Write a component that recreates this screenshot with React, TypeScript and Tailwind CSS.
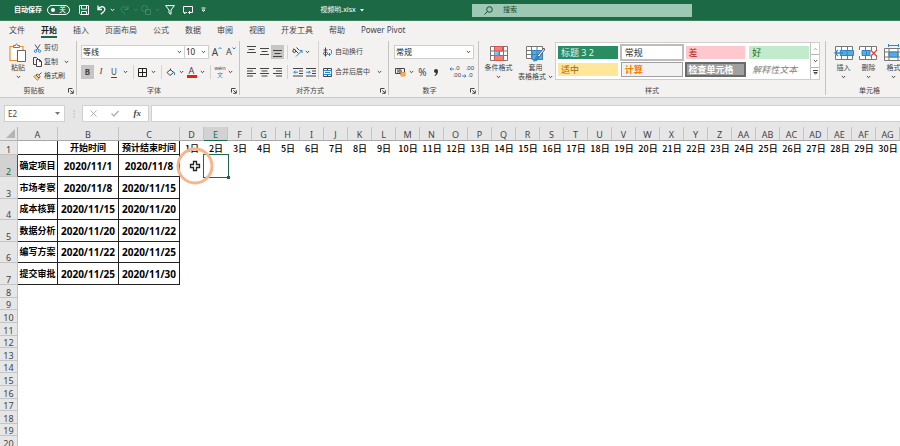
import { useState } from 'react';
import type { ReactNode } from 'react';

const tabs = ['文件', '开始', '插入', '页面布局', '公式', '数据', '审阅', '视图', '开发工具', '帮助', 'Power Pivot'];

interface CellStyle {
  name: string;
  className: string;
}

const cellStyles: CellStyle[] = [
  { name: '标题 3 2', className: 'bg-[#2a8c63] text-[#e6f2ec]' },
  { name: '常规', className: 'bg-white text-[#333] outline-2 outline-[#bdbdbd]' },
  { name: '差', className: 'bg-[#ffc7ce] text-[#b3261e]' },
  { name: '好', className: 'bg-[#c0eccd] text-[#1b6b1b]' },
  { name: '适中', className: 'bg-[#ffe699] text-[#a8650b]' },
  { name: '计算', className: 'bg-[#f2f2f2] font-bold text-[#fa7d00] outline outline-[#a0a0a0]' },
  { name: '检查单元格', className: 'bg-[#a0a0a0] font-bold text-white outline-2 -outline-offset-1 outline-[#6a6a6a]' },
  { name: '解释性文本', className: 'bg-white italic text-[#7f7f7f]' }
];

const tasks = [
  { name: '确定项目', start: '2020/11/1', end: '2020/11/8' },
  { name: '市场考察', start: '2020/11/8', end: '2020/11/15' },
  { name: '成本核算', start: '2020/11/15', end: '2020/11/20' },
  { name: '数据分析', start: '2020/11/20', end: '2020/11/22' },
  { name: '编写方案', start: '2020/11/22', end: '2020/11/25' },
  { name: '提交审批', start: '2020/11/25', end: '2020/11/30' }
];

const days = Array.from({ length: 30 }, (_, i) => i + 1);
const taskHeights = [22, 22, 21, 22, 21, 22];
const emptyHeights = [13, 12, 13, 13, 12];
const emptyRows = Array.from({ length: 13 }, (_, i) => ({
  number: i + 8,
  height: emptyHeights[i % emptyHeights.length]
}));

// 0 -> A, 25 -> Z, 26 -> AA
const columnName = (index: number): string =>
  index < 26 ? String.fromCharCode(65 + index) : `A${String.fromCharCode(65 + index - 26)}`;

function Icon({ w, h, children }: { w: number; h: number; children: ReactNode }) {
  return (
    <svg
      width={w}
      height={h}
      viewBox={`0 0 ${w} ${h}`}
      fill="none"
      stroke="currentColor"
      strokeWidth="1"
      className="shrink-0"
      aria-hidden="true"
    >
      {children}
    </svg>
  );
}

function Chevron() {
  return (
    <Icon w={5} h={4}>
      <path d="M.8 1l1.7 1.7L4.2 1" />
    </Icon>
  );
}

function Tool({ label, className, children }: { label: string; className: string; children: ReactNode }) {
  return (
    <button
      type="button"
      aria-label={label}
      className={`flex h-3.5 shrink-0 items-center justify-center whitespace-nowrap ${className}`}
    >
      {children}
    </button>
  );
}

function Drop({ label, className = 'w-2.5' }: { label: string; className?: string }) {
  return (
    <Tool label={label} className={className}>
      <Chevron />
    </Tool>
  );
}

function Sep() {
  return <span className="mx-[3px] h-3.5 w-px shrink-0 bg-[#d6d4d2]" />;
}

function Group({ label, launcher, className, children }: {
  label: string;
  launcher?: boolean;
  className: string;
  children: ReactNode;
}) {
  return (
    <section aria-label={label} className={`flex h-[54px] shrink-0 flex-col border-r border-[#c6c4c2] ${className}`}>
      <div className="flex flex-1">{children}</div>
      <div className="flex h-[9px] items-center">
        <span className="flex-1 text-center leading-[9px]">{label}</span>
        {launcher && (
          <button type="button" aria-label={`${label}设置`} className="w-2">
            <Icon w={6} h={6}>
              <path d="M.5 4.5v-4h4M2.3 2.3l2.7 2.7M5.3 2.3v3h-3" />
            </Icon>
          </button>
        )}
      </div>
    </section>
  );
}

function BigButton({ icon, lines, className }: { icon: ReactNode; lines: string[]; className: string }) {
  return (
    <button type="button" className={`flex shrink-0 flex-col items-center pt-0.5 leading-[9px] whitespace-nowrap ${className}`}>
      <span className="flex h-5 items-center">{icon}</span>
      <span>{lines[0]}</span>
      <span className="flex h-[9px] items-center gap-0.5">
        {lines[1]}
        <Chevron />
      </span>
    </button>
  );
}

function Picker({ label, options, className }: { label: string; options: string[]; className: string }) {
  return (
    <div className={`relative flex h-3.5 shrink-0 items-center border border-[#d0cecc] bg-white ${className}`}>
      <select aria-label={label} className="h-full w-full appearance-none bg-transparent pl-px text-[8px] leading-3 text-[#222] outline-none">
        {options.map((option) => (
          <option key={option}>{option}</option>
        ))}
      </select>
      <span className="pointer-events-none absolute right-0.5">
        <Chevron />
      </span>
    </div>
  );
}

function TitleBar() {
  return (
    <header className="grid h-[21px] grid-cols-[208px_264fr_220fr_208fr] items-center border-b border-[#3f8460] bg-[#1c6a45] text-[7px] text-white">
      <div className="flex items-center pl-3.5">
        <label htmlFor="autosave" className="w-[33px] font-bold whitespace-nowrap">自动保存</label>
        <span className="relative flex w-8 items-center">
          <input
            id="autosave"
            type="checkbox"
            role="switch"
            className="h-2.5 w-[23px] appearance-none rounded-full border border-white before:mt-[2px] before:ml-[3px] before:block before:size-1 before:rounded-full before:bg-white"
          />
          <span className="pointer-events-none absolute left-3 leading-[10px]">关</span>
        </span>
        <button type="button" aria-label="保存" className="w-[18px]">
          <Icon w={10} h={10}>
            <path d="M.5.5h9v9h-8l-1-1zM2.5.5v3.5h5V.5M2.5 9.5v-3h5v3" />
          </Icon>
        </button>
        <button type="button" aria-label="撤消" className="flex w-[23px] items-center gap-1">
          <Icon w={9} h={10}>
            <path strokeWidth="1.3" d="M1 .5v4h4M1.2 4.2C3 1.6 5.3 1 6.8 2.3c1.6 1.5 1.3 3-.2 4.5L3.8 9.3" />
          </Icon>
          <Chevron />
        </button>
        <button type="button" aria-label="恢复" className="flex w-[21px] items-center gap-1 text-[#438665]">
          <Icon w={9} h={10}>
            <path d="M8 .5v4H4M7.8 4.2C6 1.6 3.7 1 2.2 2.3.6 3.8.9 5.3 2.4 6.8l2.8 2.5" />
          </Icon>
          <Chevron />
        </button>
        <button type="button" aria-label="形状" className="flex w-6 items-center gap-1 text-[#438665]">
          <Icon w={10} h={10}>
            <circle cx="3.5" cy="3.5" r="3" />
            <path d="M4.5 4.5h5v5h-5z" />
          </Icon>
          <Chevron />
        </button>
        <button type="button" aria-label="筛选" className="w-[18px]">
          <Icon w={10} h={10}>
            <path d="M.6.6h8.8L6 5v4.3L4 8V5z" />
          </Icon>
        </button>
        <button type="button" aria-label="批注" className="w-[18px]">
          <Icon w={10} h={10}>
            <path d="M4 7.5H2.5L1.5 9V7.5h-1v-6h9V6M9.5 4.5v3h-4M7 6L5.5 7.5 7 9" />
          </Icon>
        </button>
        <button type="button" aria-label="自定义快速访问工具栏">
          <Icon w={5} h={6}>
            <path d="M.5 1h4M1 3l1.5 1.5L4 3z" />
          </Icon>
        </button>
      </div>
      <h1 className="flex items-center justify-center gap-1 pl-1">
        视频哟.xlsx
        <svg width="4" height="3" fill="currentColor" aria-hidden="true">
          <path d="M0 0h4L2 2.5z" />
        </svg>
      </h1>
      <label className="flex h-[13px] items-center gap-2.5 bg-[#9dc8b3] pl-3 text-[#174d34]">
        <Icon w={9} h={9}>
          <circle cx="5.5" cy="3.5" r="2.8" />
          <path d="M3.5 5.5L.5 8.5" />
        </Icon>
        <input type="text" aria-label="搜索" placeholder="搜索" className="min-w-0 flex-1 bg-transparent outline-none placeholder:text-[#174d34]" />
      </label>
    </header>
  );
}

function TabBar({ active, onSelect }: { active: string; onSelect: (tab: string) => void }) {
  return (
    <nav className="flex h-[19px] gap-4 overflow-hidden pt-0.5 pl-[9px] text-[8px] leading-3">
      {tabs.map((tab) => (
        <button
          key={tab}
          type="button"
          onClick={() => onSelect(tab)}
          className={`h-3.5 shrink-0 border-b whitespace-nowrap ${
            tab === active ? 'border-[#1c6a45] font-bold text-[#222] shadow-[0_1px_0_#1c6a45]' : 'border-transparent'
          }`}
        >
          {tab}
        </button>
      ))}
    </nav>
  );
}

function ClipboardGroup() {
  return (
    <Group label="剪贴板" launcher className="w-[77px]">
      <BigButton
        className="w-[30px] pl-1.5"
        lines={['粘贴', '']}
        icon={
          <Icon w={18} h={20}>
            <path fill="#fff" stroke="#e8912d" strokeWidth="1.2" d="M4 3.5H1v14h7.5v-10H14v-4h-3" />
            <path stroke="#777" fill="#f3f2f1" d="M4.5 4.5v-2h2c0-2 2-2 2 0h2v2z" />
            <path fill="#fff" stroke="#666" d="M8.5 7.5h8v11h-8z" />
          </Icon>
        }
      />
      <div className="flex flex-col pl-[3px]">
        <button type="button" className="flex h-3.5 items-center gap-0.5">
          <Icon w={9} h={9}>
            <path stroke="#555" d="M2 .5l3.6 5.5M7 .5L3.4 6" />
            <circle cx="2.5" cy="7.2" r="1.2" stroke="#2b88c8" />
            <circle cx="6.5" cy="7.2" r="1.2" stroke="#2b88c8" />
          </Icon>
          剪切
        </button>
        <div className="flex">
          <button type="button" className="flex h-3.5 items-center gap-0.5">
            <Icon w={9} h={10}>
              <path d="M3 7.5H.5v-7h3L5 2" />
              <path fill="#fff" d="M3.5 2.5h3l2 2v5h-5z" />
              <path d="M6.5 2.5v2h2" />
            </Icon>
            复制
          </button>
          <Drop label="复制选项" className="ml-1 w-2" />
        </div>
        <button type="button" className="flex h-3.5 items-center gap-0.5">
          <Icon w={9} h={9}>
            <path stroke="#e8912d" fill="#f8c98c" d="M.5 4.5L3 3l3 3-1.5 2.5z" />
            <path stroke="#555" d="M3 3l1.5-1L7 4.5 6 6zM6 3L8.5.5" />
          </Icon>
          格式刷
        </button>
      </div>
    </Group>
  );
}

function FontGroup() {
  return (
    <Group label="字体" launcher className="w-[163px]">
      <div className="flex flex-col gap-1.5 pt-1 pl-1">
        <div className="flex">
          <Picker label="字体" options={['等线', '宋体', '黑体']} className="w-[104px]" />
          <Picker label="字号" options={['10', '11', '12']} className="-ml-px w-[25px]" />
          <Tool label="增大字号" className="ml-0.5 w-3 items-start text-[10px] leading-3.5">
            A<Icon w={4} h={6}><path stroke="#2b88c8" d="M.5 4L2 2.5 3.5 4" /></Icon>
          </Tool>
          <Tool label="减小字号" className="ml-0.5 w-3 items-start text-[9px] leading-3.5">
            A<Icon w={4} h={6}><path stroke="#2b88c8" d="M.5 2.5L2 4l1.5-1.5" /></Icon>
          </Tool>
        </div>
        <div className="flex">
          <Tool label="加粗" className="w-[13px] bg-[#c8c6c4] text-[8px] font-bold">B</Tool>
          <Tool label="倾斜" className="w-3.5 font-['Liberation_Serif',serif] text-[9px] italic">I</Tool>
          <Tool label="下划线" className="w-3 text-[8px] underline underline-offset-2">U</Tool>
          <Drop label="下划线选项" />
          <Sep />
          <Tool label="边框" className="w-[11px]">
            <Icon w={9} h={9}><path stroke="#222" d="M.5.5h8v8h-8zM4.5.5v8M.5 4.5h8" /></Icon>
          </Tool>
          <Drop label="边框选项" />
          <Sep />
          <Tool label="填充颜色" className="w-[11px]">
            <Icon w={10} h={9}>
              <path d="M4.5.5v2M1 4.5l3.5-3 3 3-3.5 3z" />
              <path fill="#2b88c8" stroke="#2b88c8" d="M7.5 3.5c1 1 1.2 2 1 3.5" />
            </Icon>
          </Tool>
          <Drop label="填充颜色选项" />
          <Tool label="字体颜色" className="w-[11px] flex-col text-[9px] leading-[9px]">
            A<span className="h-[3px] w-2.5 bg-[#e81f12]" />
          </Tool>
          <Drop label="字体颜色选项" />
          <Sep />
          <Tool label="拼音指南" className="w-3 flex-col font-['Liberation_Sans','Noto_Sans_CJK_SC',sans-serif] text-[6px] leading-[7px]">
            <span>wén</span>
            <span className="text-[#2b88c8]">文</span>
          </Tool>
          <Drop label="拼音选项" className="w-2" />
        </div>
      </div>
    </Group>
  );
}

const verticalAligns = [
  { label: '顶端对齐', className: 'w-[13px] pb-1' },
  { label: '垂直居中', className: 'w-[13px]' },
  { label: '底端对齐', className: 'w-[13px] bg-[#c8c6c4] pt-1' }
];

const horizontalAligns = [
  { label: '左对齐', d: 'M0 .5h9M0 3h6M0 5.5h9M0 8h6' },
  { label: '居中', d: 'M0 .5h9M1.5 3h6M0 5.5h9M1.5 8h6' },
  { label: '右对齐', d: 'M0 .5h9M3 3h6M0 5.5h9M3 8h6' }
];

function AlignGroup() {
  return (
    <Group label="对齐方式" launcher className="w-[149px]">
      <div className="flex flex-col gap-1.5 pt-1 pl-[5px]">
        <div className="flex">
          {verticalAligns.map((item) => (
            <Tool key={item.label} label={item.label} className={item.className}>
              <Icon w={9} h={8}><path d="M0 .5h9M1.5 3.5h6M0 6.5h9" /></Icon>
            </Tool>
          ))}
          <Sep />
          <Tool label="方向" className="w-[13px]">
            <Icon w={11} h={10}>
              <circle cx="2.3" cy="4" r="1.5" />
              <path d="M1.5 1.5l5 5M4.5.5l2.5 2.5" />
              <path stroke="#2b88c8" d="M4 9.5l6-6M7.5 3.5H10V6" />
            </Icon>
          </Tool>
          <Drop label="方向选项" className="w-1.5" />
        </div>
        <div className="flex">
          {horizontalAligns.map((item) => (
            <Tool key={item.label} label={item.label} className="w-[13px]">
              <Icon w={9} h={9}><path d={item.d} /></Icon>
            </Tool>
          ))}
          <Sep />
          <Tool label="减少缩进量" className="w-[13px]">
            <Icon w={10} h={9}>
              <path d="M0 .5h10M6 3h4M6 5.5h4M0 8h10" />
              <path stroke="#2b88c8" d="M5 4.2H.8M2.3 2.7L.8 4.2l1.5 1.5" />
            </Icon>
          </Tool>
          <Tool label="增加缩进量" className="w-[13px]">
            <Icon w={10} h={9}>
              <path d="M0 .5h10M6 3h4M6 5.5h4M0 8h10" />
              <path stroke="#2b88c8" d="M0 4.2h4.2M2.7 2.7l1.5 1.5-1.5 1.5" />
            </Icon>
          </Tool>
        </div>
      </div>
      <span className="mr-1 ml-px h-[38px] w-px bg-[#d6d4d2]" />
      <div className="flex flex-col gap-1.5 pt-1">
        <Tool label="自动换行" className="gap-[3px] self-start">
          <Icon w={9} h={11}>
            <path d="M2.5.5v9M.5 3h4M.5 6.5c0-2 4-2 4 0s-4 2-4 0" />
            <path stroke="#2b88c8" d="M6 2.5h1.5c1.5 0 1.5 5 0 5H5.5M7 6L5.5 7.5 7 9" />
          </Icon>
          自动换行
        </Tool>
        <div className="flex">
          <Tool label="合并后居中" className="gap-[3px]">
            <Icon w={9} h={9}>
              <path d="M.5.5h8v8h-8zM4.5.5v2M4.5 6.5v2" />
              <path fill="#e2f0fa" stroke="#2b88c8" d="M.5 2.5h8v4h-8zM2 4.5h5" />
            </Icon>
            合并后居中
          </Tool>
          <Drop label="合并选项" className="ml-1 w-2.5" />
        </div>
      </div>
    </Group>
  );
}

function NumberGroup() {
  return (
    <Group label="数字" launcher className="w-[90px]">
      <div className="flex flex-col gap-1.5 pt-1 pl-[5px]">
        <Picker label="数字格式" options={['常规', '数值', '货币', '日期']} className="w-20" />
        <div className="flex">
          <Tool label="会计数字格式" className="w-3">
            <Icon w={11} h={10}>
              <path d="M.5 1.5h9v5h-9zM2 3h1.5M2 5h1.5" />
              <circle cx="5" cy="4" r="1.3" />
              <path stroke="#e8912d" fill="#f8d8ad" d="M6 5.5h4v3.5H6zM6 7.2h4" />
            </Icon>
          </Tool>
          <Drop label="会计格式选项" />
          <Tool label="百分比样式" className="w-[13px] text-[10px]">%</Tool>
          <Tool label="千位分隔样式" className="mr-1.5 w-[13px]">
            <svg width="6" height="9" fill="#333" aria-hidden="true">
              <path d="M3 1a2 2 0 0 1 2 2c0 2.5-1 4-3 5l-.5-.8C2.5 6.5 3 6 3 5a2 2 0 0 1 0-4z" />
            </svg>
          </Tool>
          <Tool label="增加小数位数" className="w-[13px] flex-col font-['Liberation_Sans',sans-serif] text-[6px] leading-[7px]">
            <span className="flex items-center">
              <Icon w={5} h={4}><path stroke="#2b88c8" d="M5 2H1M2.5.5L1 2l1.5 1.5" /></Icon>
              .0
            </span>
            <span className="self-end">.00</span>
          </Tool>
          <Tool label="减少小数位数" className="w-[13px] flex-col font-['Liberation_Sans',sans-serif] text-[6px] leading-[7px]">
            <span className="self-end">.00</span>
            <span className="flex items-center">
              <Icon w={5} h={4}><path stroke="#2b88c8" d="M0 2h4M2.5.5L4 2 2.5 3.5" /></Icon>
              .0
            </span>
          </Tool>
        </div>
      </div>
    </Group>
  );
}

function StylesGroup() {
  return (
    <Group label="样式" className="w-[347px]">
      <BigButton
        className="ml-px w-[37px]"
        lines={['条件格式', '']}
        icon={
          <Icon w={18} h={15}>
            <path fill="#fff" stroke="#777" d="M.5.5h17v14H.5zM4.5.5v14M9.5.5v14M13.5.5v14M.5 5h17M.5 9.5h17" />
            <path fill="#f08078" stroke="#d9534a" d="M4.5.5h8V5h-8zM4.5 9.5h9v5h-9z" />
            <path fill="#8cc4ec" stroke="#5aa9e0" d="M4.5 5.5h4v3.5h-4z" />
          </Icon>
        }
      />
      <BigButton
        className="w-[37px]"
        lines={['套用', '表格格式']}
        icon={
          <Icon w={19} h={17}>
            <path fill="#fff" stroke="none" d="M.5 1h16v13H.5z" />
            <path fill="#5aa9e0" stroke="none" d="M6 5h11v10H6z" />
            <path stroke="#777" d="M.5 1.5h16V5M.5 1.5v12H6M5.500 1.500v12M11 1.5V5M.5 5.5h16M.5 9.5h5" />
            <path stroke="#2b88c8" d="M6 5.5h10.5v9H6zM6 9.5h10M11 5.5v5" />
            <path fill="#fff" stroke="#555" d="M18 3l-6.5 7.5 1.5 1.5L18.5 5z" />
            <path fill="#2b88c8" stroke="#2b88c8" d="M11 11l2 1.5c-.5 2.5-3 3.5-5.5 3.5C9.5 14.5 9 12 11 11z" />
          </Icon>
        }
      />
      <div className="mt-px ml-px flex h-[38px] w-[265px] border border-[#d0cecc] bg-white">
        <div className="grid flex-1 grid-cols-4 content-start gap-1 py-[3px] pr-px pl-0.5">
          {cellStyles.map((style) => (
            <button
              key={style.name}
              type="button"
              className={`h-[13px] overflow-hidden pl-[3px] text-left text-[9px] leading-[13px] whitespace-nowrap ${style.className}`}
            >
              {style.name}
            </button>
          ))}
        </div>
        <div className="flex w-[9px] flex-col divide-y divide-[#b8b6b4] border-l border-[#c6c4c2]">
          <button type="button" aria-label="上一行" className="flex flex-1 items-center justify-center text-[#aaa]">
            <Icon w={5} h={4}><path d="M.8 3l1.7-1.7L4.2 3" /></Icon>
          </button>
          <button type="button" aria-label="下一行" className="flex flex-1 items-center justify-center">
            <Chevron />
          </button>
          <button type="button" aria-label="其他样式" className="flex flex-1 items-center justify-center">
            <Icon w={5} h={6}><path d="M0 .5h5M.8 2.5l1.7 1.7 1.7-1.7z" /></Icon>
          </button>
        </div>
      </div>
    </Group>
  );
}

function CellsGroup() {
  return (
    <Group label="单元格" className="w-[87px] border-r-0">
      <BigButton
        className="ml-[5px] w-[25px]"
        lines={['插入', '']}
        icon={
          <Icon w={20} h={14}>
            <path fill="#fff" stroke="#777" d="M1.5.5h17v13h-17zM7.5.5v13M13.5.5v13" />
            <path fill="#5aa9e0" stroke="#2b88c8" d="M6 4.5h13.5v5H6zM13 4.5v5" />
            <path stroke="#fff" strokeWidth="3" d="M6 7H1" />
            <path stroke="#2b88c8" strokeWidth="1.3" d="M9 7H1M4 4L1 7l3 3" />
          </Icon>
        }
      />
      <BigButton
        className="w-[25px]"
        lines={['删除', '']}
        icon={
          <Icon w={19} h={14}>
            <path fill="#fff" stroke="#777" d="M.5.5h17v13H.5zM6.5.5v13M12.5.5v13" />
            <path fill="#fff" stroke="none" d="M0 4h19v6H0z" />
            <path fill="#5aa9e0" stroke="#2b88c8" d="M3 4.5h8v5H3zM7.5 4.5v5" />
            <path stroke="#e0453a" strokeWidth="1.3" d="M11.5 4l6.5 6.5M18 4l-6.5 6.5" />
          </Icon>
        }
      />
      <BigButton
        className="w-[25px]"
        lines={['格式', '']}
        icon={
          <Icon w={19} h={19}>
            <path stroke="#2b88c8" d="M4.5 1.5h10M4.5 0v3M14.5 0v3" />
            <path fill="#fff" stroke="#777" d="M.5 4.5h18v12H.5zM.5 8h18M.5 13h18" />
            <path fill="#5aa9e0" stroke="#2b88c8" d="M5 8h9v5H5z" />
            <path stroke="#777" d="M5 4.5v12M14 4.5v12" />
          </Icon>
        }
      />
    </Group>
  );
}

function FormulaBar() {
  return (
    <div className="flex h-[29px] items-start bg-[#e6e6e6] pt-[7px] pl-1 text-[8px]">
      <div className="relative flex h-[17px] w-[61px] items-center border border-[#d0d0d0] bg-white">
        <input type="text" aria-label="名称框" defaultValue="E2" className="w-full bg-transparent pl-[3px] text-[#444] outline-none" />
        <svg width="5" height="3" fill="#777" className="absolute right-1" aria-hidden="true">
          <path d="M0 0h5L2.5 3z" />
        </svg>
      </div>
      <div className="flex h-[17px] w-[17px] items-center justify-center text-[#999]">
        <Icon w={2} h={8}><path strokeDasharray="1 2" d="M1 .5v7" /></Icon>
      </div>
      <div className="flex h-[17px] w-[67px] items-center justify-around border border-[#d0d0d0] bg-white text-[#b0b0b0]">
        <button type="button" aria-label="取消">
          <Icon w={7} h={7}><path d="M.5.5l6 6M6.5.5l-6 6" /></Icon>
        </button>
        <button type="button" aria-label="输入">
          <Icon w={8} h={7}><path strokeWidth="1.3" d="M.5 3.5L3 6l4.5-5" /></Icon>
        </button>
        <button type="button" aria-label="插入函数" className="font-['Liberation_Serif',serif] text-[9px] font-bold text-[#444] italic">
          fx
        </button>
      </div>
      <input type="text" aria-label="编辑栏" className="ml-0.5 h-[17px] min-w-0 flex-1 border border-r-0 border-[#d0d0d0] bg-white px-1 outline-none" />
    </div>
  );
}

function RowHead({ number, active }: { number: number; active?: boolean }) {
  return (
    <th
      scope="row"
      className={`border-r border-b border-[#c4c4c4] p-0 text-center align-bottom text-[9px] leading-[9px] font-normal ${
        active ? 'border-r-[#1c6a45] bg-[#d2d2d2] text-[#1c6a45]' : 'bg-[#e6e6e6] text-[#444]'
      }`}
    >
      {number}
    </th>
  );
}

function Pointer() {
  return (
    <span className="pointer-events-none absolute -top-2 -left-1 z-10">
      <Icon w={38} h={38}>
        <circle cx="19" cy="19" r="17" stroke="#f7b58c" strokeWidth="3" />
        <path fill="#fff" stroke="#222" strokeWidth="1.3" d="M17.5 14.5h3v3h3v3h-3v3h-3v-3h-3v-3h3z" />
      </Icon>
    </span>
  );
}

function Sheet() {
  const dataCell = 'border-r border-b border-[#222] p-0 text-center font-bold whitespace-nowrap';

  return (
    <div className="overflow-hidden bg-white">
      <table className="w-[900px] table-fixed border-separate border-spacing-0 text-black">
        <colgroup>
          <col className="w-[18px]" />
          <col className="w-10" />
          <col className="w-[61px]" />
          <col className="w-[61px]" />
          {days.map((day) => (
            <col key={day} className="w-6" />
          ))}
        </colgroup>
        <thead>
          <tr className="h-3.5 bg-[#e6e6e6] text-[9px] leading-[11px] text-[#444]">
            <td className="border-r border-b border-[#b4b4b4] p-0">
              <svg width="9" height="9" fill="#b4b4b4" className="mr-0.5 ml-auto" aria-hidden="true">
                <path d="M9 0v9H0z" />
              </svg>
            </td>
            {Array.from({ length: 33 }, (_, i) => (
              <th
                key={i}
                scope="col"
                className={`border-r border-b p-0 align-bottom font-normal ${
                  i === 4
                    ? 'border-r-[#c4c4c4] border-b-[#1c6a45] bg-[#d2d2d2] text-[#1c6a45]'
                    : 'border-r-[#c4c4c4] border-b-[#a8a8a8]'
                }`}
              >
                {columnName(i)}
              </th>
            ))}
          </tr>
        </thead>
        <tbody>
          <tr className="h-3.5 text-[9px] leading-[13px]">
            <RowHead number={1} />
            <td className={dataCell} />
            <td className={dataCell}>开始时间</td>
            <td className={dataCell}>预计结束时间</td>
            {days.map((day) => (
              <td key={day} className="p-0 text-center font-['Noto_Sans_CJK_SC',sans-serif] font-medium whitespace-nowrap">
                {day}日
              </td>
            ))}
          </tr>
          {tasks.map((task, i) => (
            <tr key={task.name} className="text-[10px] leading-4" style={{ height: taskHeights[i] }}>
              <RowHead number={i + 2} active={i === 0} />
              <td className={`${dataCell} text-[9px]`}>{task.name}</td>
              <td className={dataCell}>{task.start}</td>
              <td className={dataCell}>{task.end}</td>
              {days.map((day) => (
                <td key={day} className="relative p-0">
                  {i === 0 && day === 1 && <Pointer />}
                  {i === 0 && day === 2 && (
                    <span className="absolute -inset-px border border-[#1c6a45]">
                      <span className="absolute -right-0.5 -bottom-0.5 size-[3px] bg-[#1c6a45]" />
                    </span>
                  )}
                </td>
              ))}
            </tr>
          ))}
          {emptyRows.map((row) => (
            <tr key={row.number} style={{ height: row.height }}>
              <RowHead number={row.number} />
              <td colSpan={33} className="p-0" />
            </tr>
          ))}
        </tbody>
      </table>
    </div>
  );
}

export default function App() {
  const [activeTab, setActiveTab] = useState('开始');

  return (
    <div className="h-screen overflow-hidden bg-white font-['Noto_Sans','Noto_Sans_CJK_SC',sans-serif]">
      <TitleBar />
      <div className="border-b border-[#c8c8c8] bg-[#f3f2f1] text-[7px] text-[#444]">
        <TabBar active={activeTab} onSelect={setActiveTab} />
        <div className="flex h-[57px] overflow-hidden pt-px">
          <ClipboardGroup />
          <FontGroup />
          <AlignGroup />
          <NumberGroup />
          <StylesGroup />
          <CellsGroup />
        </div>
      </div>
      <FormulaBar />
      <Sheet />
    </div>
  );
}
